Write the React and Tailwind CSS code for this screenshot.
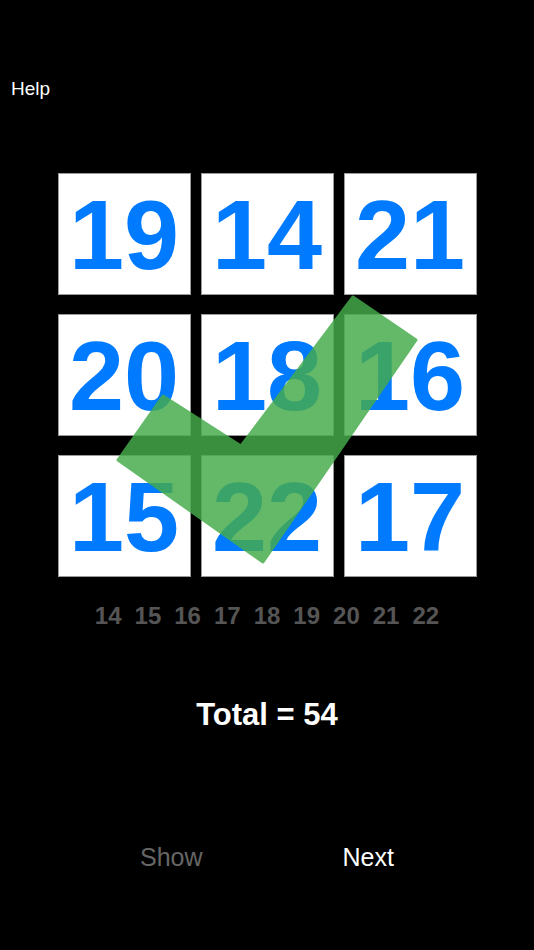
import React from "react";

const tiles = [19, 14, 21, 20, 18, 16, 15, 22, 17];
const options = [14, 15, 16, 17, 18, 19, 20, 21, 22];

function Check() {
  return (
    <svg
      className="absolute left-0 top-0 pointer-events-none"
      width="534"
      height="950"
      viewBox="0 0 534 950"
    >
      <g opacity="0.83">
        <path
          d="M163 396 L241 446 L353 297 L416 340 L263 562 L118 460 Z"
          fill="#45ac4b"
          stroke="#45ac4b"
          strokeWidth="3"
          strokeLinejoin="round"
        />
      </g>
    </svg>
  );
}

export default function App() {
  return (
    <div
      className="relative w-[534px] h-[950px] bg-black overflow-hidden flex flex-col"
      style={{ fontFamily: '"Liberation Sans", Arial, sans-serif' }}
    >
      <p className="pt-[78px] pl-[11px] text-[19px] leading-[22px] text-white">Help</p>

      <div className="mt-[73px] mx-auto grid grid-cols-[133px_133px_133px] auto-rows-[122px] gap-x-[10px] gap-y-[19px]">
        {tiles.map((n, i) => (
          <div
            key={i}
            className="bg-white border border-[#9a9a9a] flex items-center justify-center text-[#007aff] font-bold text-[99px] leading-none"
          >
            {n}
          </div>
        ))}
      </div>

      <div className="mt-[24px] flex justify-center gap-[13px] text-[24px] leading-[30px] font-bold text-[#555555]">
        {options.map((n) => (
          <span key={n}>{n}</span>
        ))}
      </div>

      <p className="mt-[66px] text-center text-white font-bold text-[31px] leading-[36px]">Total = 54</p>

      <div className="mt-[109px] flex justify-center gap-[140px] text-[25px] leading-[30px]">
        <span className="text-[#666666]">Show</span>
        <span className="text-white">Next</span>
      </div>

      <Check />
    </div>
  );
}
